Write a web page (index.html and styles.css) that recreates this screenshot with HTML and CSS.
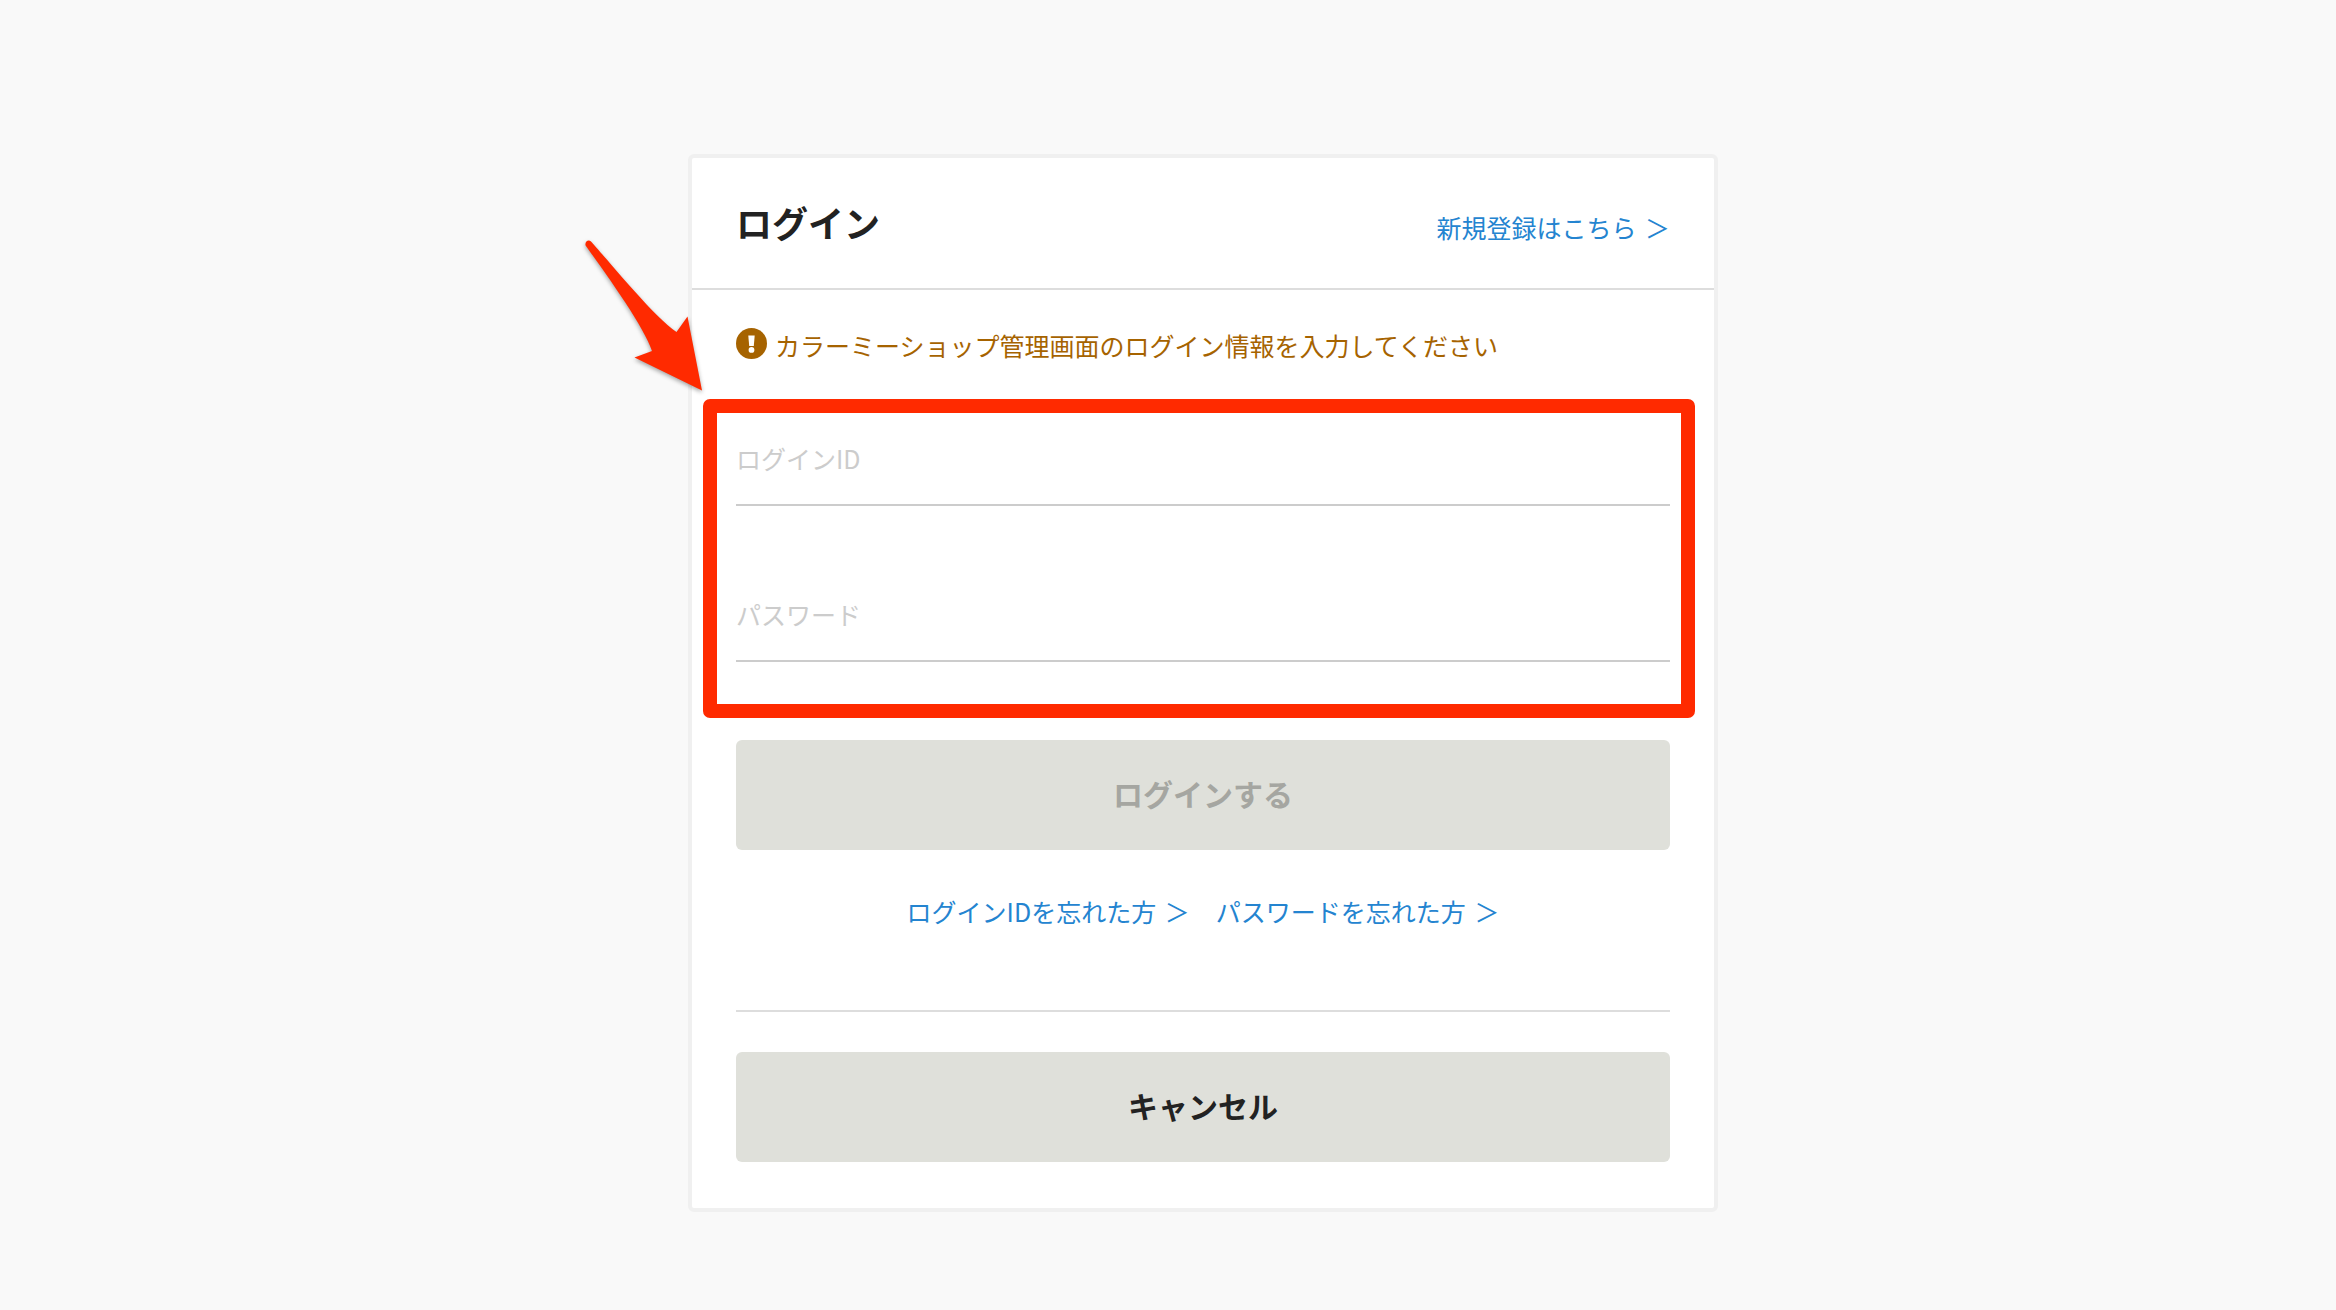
FILE: index.html
```html
<!DOCTYPE html>
<html lang="ja">
<head>
    <meta charset="UTF-8">
    <meta name="viewport" content="width=device-width, initial-scale=1.0">
    <title>ログイン</title>
    <link rel="stylesheet" href="styles.css">
</head>
<body>
    <main class="login">
        <header class="login-header">
            <h1 class="login-title">ログイン</h1>
            <a href="#" class="link">新規登録はこちら <span class="link-arrow">＞</span></a>
        </header>

        <form class="login-body">
            <p class="notice">
                <svg class="notice-icon" viewBox="0 0 31 31" aria-hidden="true">
                    <circle cx="15.5" cy="15.5" r="15.5" fill="#a66300"/>
                    <path d="M12.3 7.5h6.4l-.9 10.5h-4.6z" fill="#fff"/>
                    <circle cx="15.5" cy="21.9" r="2.9" fill="#fff"/>
                </svg>
                カラーミーショップ管理画面のログイン情報を入力してください
            </p>

            <div class="fields">
                <input type="text" class="field" placeholder="ログインID" aria-label="ログインID">
                <input type="password" class="field" placeholder="パスワード" aria-label="パスワード">

                <!-- 入力欄を示す赤枠と矢印 -->
                <span class="mark-frame"></span>
                <svg class="mark-arrow" viewBox="0 0 130 160" aria-hidden="true">
                    <path d="M5.6 9.5C4.500 5.500 8.500 3 11 5.500C27 23 75 82 96.500 96L107.500 80.500L122 154.500L54.500 121.500L72 115C64 91 31 45 5.600 9.500Z" fill="#ff2a00"/>
                </svg>
            </div>

            <button type="submit" class="button" disabled>ログインする</button>

            <nav class="help">
                <a href="#" class="link">ログインIDを忘れた方 <span class="link-arrow">＞</span></a>
                <a href="#" class="link">パスワードを忘れた方 <span class="link-arrow">＞</span></a>
            </nav>

            <button type="button" class="button">キャンセル</button>
        </form>
    </main>
</body>
</html>
```

FILE: styles.css
```css
*{margin:0;padding:0;box-sizing:border-box;}

body{
    padding:154px 0 98px 70px;
    background:#f9f9f9;
    color:#222;
    font-family:"Noto Sans CJK JP", sans-serif;
    font-size:25px;
    line-height:40px;
}

.login{
    width:100%;max-width:1030px;
    margin:0 auto;
    border:4px solid #f0f0f0;
    border-radius:6px;
    background:#fff;
}
.login-header{
    display:flex;
    justify-content:space-between;
    align-items:baseline;
    padding:37px 44px 39px;
    border-bottom:2px solid #ddd;
}
.login-title{
    font-size:36px;
    line-height:54px;
}
.login-body{padding:35px 44px 46px;}

.link{color:#2484d0;text-decoration:none;}
.link-arrow{margin-left:3px;}

/* お知らせ */
.notice{
    display:flex;
    align-items:center;
    gap:8px;
    margin-bottom:49px;
    color:#a66300;
}
.notice-icon{
    width:31px;height:31px;
    margin-bottom:3px;
    flex:none;
}

/* 入力欄 */
.fields{
    display:grid;
    gap:64px;
    position:relative;
    margin-bottom:78px;
}
.field{
    width:100%;height:92px;
    padding-bottom:3px;
    border:0;
    border-bottom:2px solid #ccc;
    background:none;
    color:#222;
    font:inherit;
    outline:none;
}
.field::placeholder{color:#ccc;}

.mark-frame{
    position:absolute;
    top:-15px;right:-25px;bottom:-56px;left:-33px;
    border:14px solid #ff2a00;
    border-radius:7px;
    pointer-events:none;
}
.mark-arrow{
    position:absolute;
    top:-178px;left:-156px;
    width:130px;height:160px;
    filter:drop-shadow(0 2px 2px rgba(0,0,0,.35));
    pointer-events:none;
}

/* ボタン */
.button{
    display:block;
    width:100%;height:110px;
    padding-bottom:5px;
    border:0;
    border-radius:6px;
    background:#dfe0da;
    color:#222;
    font:inherit;
    font-size:30px;
    font-weight:bold;
    cursor:pointer;
}
.button:disabled{color:#a5a6a1;cursor:default;}

.help{
    display:flex;
    justify-content:center;
    gap:26px;
    margin-bottom:40px;
    padding:41px 0 79px;
    border-bottom:2px solid #ddd;
}
```
